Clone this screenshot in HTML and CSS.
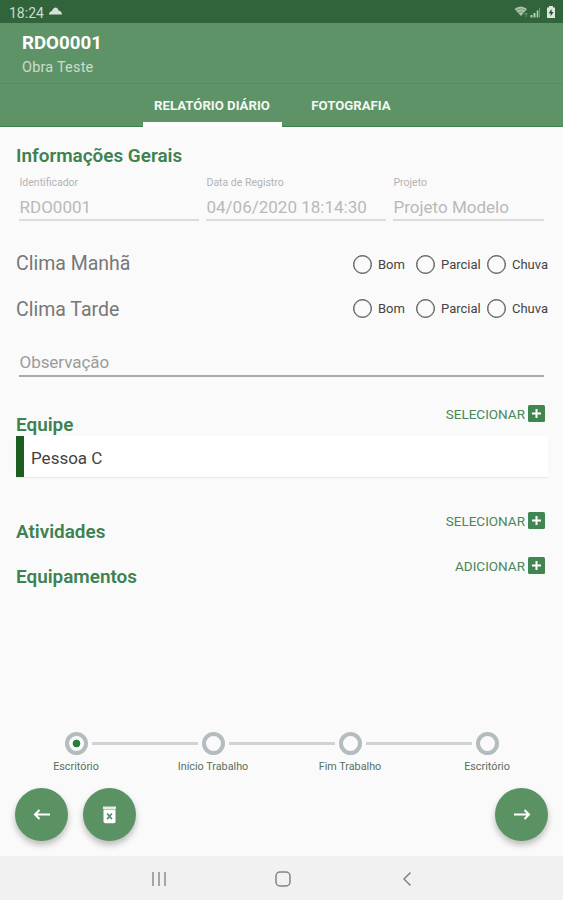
FILE: index.html
```html
<!DOCTYPE html>
<html lang="pt-BR">
<head>
    <meta charset="UTF-8">
    <meta name="viewport" content="width=device-width, initial-scale=1.0">
    <title>RDO0001</title>
    <link rel="stylesheet" href="styles.css">
</head>
<body>
    <div class="status-bar">
        <span>18:24</span>
        <svg class="cloud" width="13" height="8" viewBox="0 0 13 8"><path d="M0 7.500Q0 4.500 3 4Q4 0.500 7 0.500Q9 1 9.500 3.400Q13 4.300 13 7.500Z" fill="#d5e2d5"/></svg>
        <svg class="system" width="42" height="14" viewBox="0 0 42 14">
            <path d="M0.500 4Q6.500-1 13 4L7 11Z" fill="#a9c5ab"/>
            <path d="M2.500 5.200Q7 2.300 11 5.200M4.500 7.500Q7 6 9.300 7.500" fill="none" stroke="#5d8963" stroke-width=".8"/>
            <path d="M12 8v4M10.500 9.500l1.500-1.500 1.500 1.500" fill="none" stroke="#7da180" stroke-width=".8"/>
            <path d="M17.500 10v2.500M20.500 8v4.500" stroke="#b5ceb6" stroke-width="2"/>
            <path d="M23.500 5.500v7" stroke="#b5ceb6" stroke-width="1.600"/>
            <path d="M25.500 3v9.500" stroke="#6f9674"/>
            <path d="M33 2.500h2V1h4v1.500h2V13h-8z" fill="#dce8dc"/>
            <path d="M37.600 4l-3 4.200h2v3l3-4.200h-2z" fill="#244f2b"/>
        </svg>
    </div>
    <header>
        <h1>RDO0001</h1>
        <p>Obra Teste</p>
    </header>
    <nav class="tabs">
        <a class="tab active">RELATÓRIO DIÁRIO</a>
        <a class="tab">FOTOGRAFIA</a>
    </nav>

    <main>
        <h2>Informações Gerais</h2>
        <div class="fields">
            <div class="field">
                <label>Identificador</label>
                <div class="value">RDO0001</div>
            </div>
            <div class="field">
                <label>Data de Registro</label>
                <div class="value">04/06/2020 18:14:30</div>
            </div>
            <div class="field">
                <label>Projeto</label>
                <div class="value">Projeto Modelo</div>
            </div>
        </div>

        <div class="clima manha">
            <span class="clima-name">Clima Manhã</span>
            <div class="radios">
                <label><i></i>Bom</label>
                <label><i></i>Parcial</label>
                <label><i></i>Chuva</label>
            </div>
        </div>
        <div class="clima tarde">
            <span class="clima-name">Clima Tarde</span>
            <div class="radios">
                <label><i></i>Bom</label>
                <label><i></i>Parcial</label>
                <label><i></i>Chuva</label>
            </div>
        </div>

        <div class="observacao">Observação</div>

        <div class="section equipe">
            <h2>Equipe</h2>
            <a class="action">SELECIONAR<svg width="17" height="17" viewBox="0 0 17 17"><rect width="17" height="17" rx="1.500" fill="#418551"/><path d="M8.500 4v9M4 8.500h9" stroke="#fff" stroke-width="2"/></svg></a>
        </div>
        <div class="person">Pessoa C</div>

        <div class="section atividades">
            <h2>Atividades</h2>
            <a class="action">SELECIONAR<svg width="17" height="17" viewBox="0 0 17 17"><rect width="17" height="17" rx="1.500" fill="#418551"/><path d="M8.500 4v9M4 8.500h9" stroke="#fff" stroke-width="2"/></svg></a>
        </div>
        <div class="section">
            <h2>Equipamentos</h2>
            <a class="action">ADICIONAR<svg width="17" height="17" viewBox="0 0 17 17"><rect width="17" height="17" rx="1.500" fill="#418551"/><path d="M8.500 4v9M4 8.500h9" stroke="#fff" stroke-width="2"/></svg></a>
        </div>
    </main>

    <div class="stepper">
        <div class="step current"><i></i><span>Escritório</span></div>
        <div class="step"><i></i><span>Início Trabalho</span></div>
        <div class="step"><i></i><span>Fim Trabalho</span></div>
        <div class="step"><i></i><span>Escritório</span></div>
    </div>

    <div class="buttons">
        <button>
            <svg width="18" height="14" viewBox="0 0 18 14"><path d="M17 6.500H2M6.500 2L2 6.500l4.500 4.500" fill="none" stroke="#fff" stroke-width="2"/></svg>
        </button>
        <button>
            <svg width="14" height="18" viewBox="0 0 14 18">
                <path d="M0 0.500h13v2.500H0z" fill="#e4efe4"/>
                <path d="M0.500 3.600h12V15.500q0 1.800-1.800 1.800H2.300Q0.500 17.300 0.500 15.500z" fill="#fff"/>
                <path d="M4.100 7.500l4.800 5.600M8.900 7.500l-4.800 5.600" stroke="#55905f" stroke-width="1.700"/>
            </svg>
        </button>
        <button class="next">
            <svg width="18" height="14" viewBox="0 0 18 14"><path d="M1 6.500h15M11.500 2l4.500 4.500-4.500 4.500" fill="none" stroke="#fff" stroke-width="2"/></svg>
        </button>
    </div>

    <footer>
        <svg width="16" height="16" viewBox="0 0 16 16"><path d="M2 1v14M8 1v14M14 1v14" stroke="#8d8d8d" stroke-width="1.500"/></svg>
        <svg width="16" height="16" viewBox="0 0 16 16"><rect x="1" y="1" width="14" height="14" rx="4" fill="none" stroke="#838383" stroke-width="1.500"/></svg>
        <svg width="16" height="16" viewBox="0 0 16 16"><path d="M11.500 1.500L5 8l6.500 6.500" fill="none" stroke="#838383" stroke-width="1.500"/></svg>
    </footer>
</body>
</html>
```
FILE: styles.css
```css
* {
    box-sizing: border-box;
}
body {
    margin: 0;
    height: 900px;
    display: flex;
    flex-direction: column;
    overflow: hidden;
    background-color: #fafafa;
    font-family: Roboto, sans-serif;
}
h1, h2, p {
    margin: 0;
}
.status-bar {
    height: 23px;
    display: flex;
    align-items: center;
    padding: 2px 7px 0 9px;
    background-color: #32643b;
    color: #ccdccd;
    font-size: 14px;
}
.status-bar .cloud {
    margin: -3px 0 0 5px;
}
.status-bar .system {
    margin: -1px 0 0 auto;
}
header {
    height: 61px;
    padding: 9px 22px 0;
    background-color: #5e9367;
    border-bottom: 1px solid #568b60;
    color: #fff;
}
header h1 {
    font-size: 18.700px;
    font-weight: 700;
    line-height: 23px;
}
header p {
    margin-top: 3px;
    font-size: 14.500px;
    letter-spacing: 0.2px;
    line-height: 19px;
    color: #c9ddcc;
}
.tabs {
    height: 43px;
    display: flex;
    justify-content: center;
    background-color: #5e9367;
    border-bottom: 1px solid #3c804c;
}
.tab {
    display: flex;
    width: 139px;
    height: 43px;
    align-items: center;
    justify-content: center;
    border-bottom: 5px solid transparent;
    padding-top: 5px;
    color: #f3f8f3;
    font-size: 13.200px;
    font-weight: 700;
}
.tab.active {
    border-bottom-color: #fff;
}
main {
    height: 603px;
    padding: 0 15px 0 16px;
}
h2 {
    color: #3d8250;
    font-size: 18.900px;
    font-weight: 600;
    line-height: 22px;
}
main > h2 {
    padding-top: 18px;
}
.fields {
    display: grid;
    grid-template-columns: 180px 180px 151px;
    gap: 7px;
    margin: 9px 3px 0;
}
.field label {
    display: block;
    padding-left: 0.500px;
    font-size: 10.500px;
    line-height: 13px;
    color: #b3b3b3;
}
.value {
    height: 32px;
    padding: 7px 0 0 0.500px;
    border-bottom: 2px solid #dcdcdc;
    color: #b9b9b9;
    font-size: 17px;
    line-height: 23px;
}
.clima {
    display: flex;
    height: 44px;
    justify-content: space-between;
    align-items: center;
}
.clima.manha {
    margin-top: 21px;
}
.clima-name {
    color: #777;
    font-size: 19.500px;
}
.manha .clima-name {
    padding-bottom: 2px;
}
.tarde .clima-name {
    padding-top: 2px;
}
.radios {
    display: grid;
    grid-template-columns: 63px 71px 61px;
}
.radios label {
    display: flex;
    align-items: center;
    gap: 6px;
    color: #444;
    font-size: 13px;
    white-space: nowrap;
}
.radios i {
    flex: none;
    width: 19px;
    height: 19px;
    border: 1.500px solid #555;
    border-radius: 50%;
    box-shadow: inset 0 0 0 0.500px #777;
}
.observacao {
    height: 32px;
    margin: 15px 4px 0 3px;
    padding: 5px 0 0 0.500px;
    border-bottom: 2px solid #aaa;
    color: #9b9b9b;
    font-size: 17px;
    letter-spacing: -0.05px;
    line-height: 24px;
}
.section {
    display: flex;
    height: 45px;
    justify-content: space-between;
    align-items: flex-start;
    padding-right: 3px;
}
.section h2 {
    margin-top: 9px;
}
.action {
    display: flex;
    align-items: center;
    gap: 3px;
    color: #4b8759;
    font-size: 13.500px;
}
.section.equipe {
    height: 31px;
    margin-top: 28px;
}
.person {
    height: 41px;
    border-left: 8px solid #1b5e20;
    padding-left: 7px;
    background-color: #fff;
    box-shadow: 0 1px 1px #e9e9e9;
    color: #424242;
    font-size: 17px;
    line-height: 44px;
}
.section.atividades {
    margin-top: 35px;
}
.stepper {
    display: grid;
    grid-template-columns: repeat(4, 137px);
    justify-content: center;
    height: 58px;
    padding-top: 2px;
}
.step {
    position: relative;
    display: flex;
    flex-direction: column;
    align-items: center;
    color: #58705e;
    font-size: 10.800px;
}
.step i {
    width: 23px;
    height: 23px;
    border: 4px solid #b4bcc0;
    border-radius: 50%;
}
.step.current i {
    background: radial-gradient(circle, #2e7d40 3.500px, transparent 4.200px);
}
.step span {
    margin-top: 5px;
}
/* connector to the next step */
.step:not(:last-child)::after {
    content: "";
    position: absolute;
    left: 84px;
    top: 10px;
    width: 106px;
    height: 3px;
    background-color: #d0d3d4;
}
.buttons {
    display: flex;
    height: 68px;
    gap: 15px;
    padding: 0 15px;
}
.buttons button {
    display: flex;
    width: 53px;
    height: 53px;
    align-items: center;
    justify-content: center;
    padding: 0;
    border: none;
    border-radius: 50%;
    background-color: #5b9264;
    box-shadow: 0 4px 6px rgba(0, 0, 0, .25);
}
.buttons .next {
    margin-left: auto;
}
footer {
    display: flex;
    height: 44px;
    justify-content: center;
    align-items: center;
    gap: 108px;
    padding: 2px 0 0 2px;
    background-color: #f1f1f1;
}
```
